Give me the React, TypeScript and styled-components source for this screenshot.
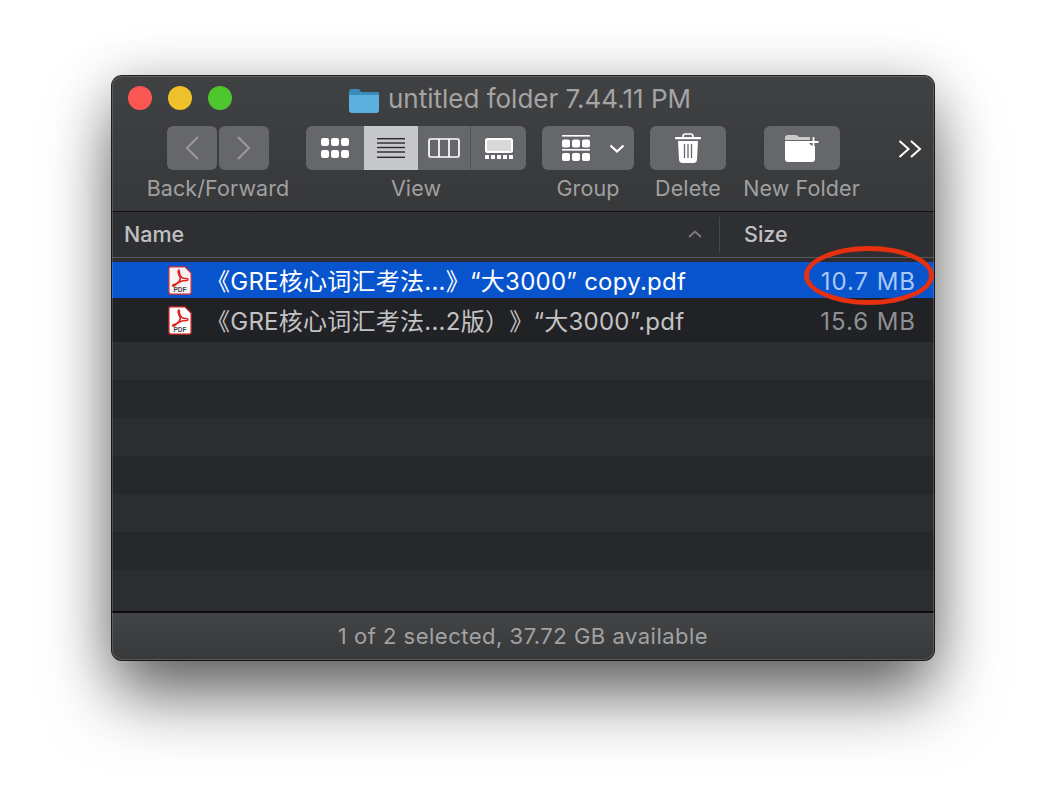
// npm
import React from 'react';
import styled, { createGlobalStyle } from 'styled-components';

// styles
const GlobalStyle = createGlobalStyle`
	html, body {
		background: #fff;
		margin: 0;
		padding: 0;
		overflow: hidden;
		font-family: Inter, 'Noto Sans CJK SC', sans-serif;
		text-spacing-trim: space-all;
	}
`;

const Page = styled.div`
	height: 808px;
	width: 1046px;
	padding: 76px 0 0 112px;
	box-sizing: border-box;
	position: relative;
`;

const Window = styled.div`
	width: 822px;
	height: 584px;
	box-sizing: border-box;
	border-radius: 10px;
	overflow: hidden;
	display: flex;
	flex-flow: column;
	background: #2b2e30;
	box-shadow:
		0 40px 68px -4px rgba(0, 0, 0, 0.55),
		0 6px 56px 0 rgba(0, 0, 0, 0.24);
`;

const Frame = styled.div`
	position: absolute;
	left: 112px;
	top: 76px;
	width: 822px;
	height: 584px;
	box-sizing: border-box;
	border-radius: 10px;
	pointer-events: none;
	box-shadow:
		0 0 0 1px rgba(0, 0, 0, 0.85),
		inset 0 0 0 1px rgba(255, 255, 255, 0.16);
`;

const Circle = styled.div`
	position: absolute;
	left: 804px;
	top: 246px;
	width: 120px;
	height: 49px;
	border: 5px solid #e6300f;
	border-radius: 50%;
`;

const Head = styled.div`
	flex: 0 0 136px;
	box-sizing: border-box;
	background: linear-gradient(#404143, #37383a);
	border-bottom: 1px solid #111;
	display: flex;
	flex-flow: column;
`;

const TitleBar = styled.div`
	flex: 0 0 50px;
	position: relative;
	display: flex;
	align-items: center;
	justify-content: center;
	gap: 9px;
	padding-right: 6px;
`;

const Lights = styled.div`
	position: absolute;
	left: 16px;
	top: 10px;
	display: flex;
	gap: 16px;
`;

const Light = styled.span<{ $color: string }>`
	width: 24px;
	height: 24px;
	border-radius: 50%;
	background: ${(p) => p.$color};
`;

const TitleText = styled.span`
	color: #a4a4a5;
	font-size: 26px;
	line-height: 30px;
	margin-top: -4px;
`;

const ToolRow = styled.div`
	flex: 1 1 auto;
	display: flex;
	gap: 16px;
	padding-left: 34px;
	position: relative;
`;

const ToolItem = styled.div<{ $width: number }>`
	flex: 0 0 auto;
	width: ${(p) => p.$width}px;
	display: flex;
	flex-flow: column;
	align-items: center;
	gap: 5px;
`;

const ToolPair = styled.div`
	display: flex;
	gap: 2px;
`;

const ToolButton = styled.div<{ $width: number }>`
	width: ${(p) => p.$width}px;
	height: 44px;
	box-sizing: border-box;
	background: #66676a;
	border-radius: 6px;
	display: flex;
	align-items: center;
	justify-content: center;
`;

const GroupButton = styled(ToolButton)`
	gap: 19px;
	padding-left: 10px;
`;

const Segments = styled.div`
	display: flex;
	border-radius: 6px;
	overflow: hidden;
`;

const Segment = styled.div<{ $width: number; $active?: boolean; $divider?: boolean }>`
	width: ${(p) => p.$width}px;
	height: 44px;
	box-sizing: border-box;
	background: ${(p) => (p.$active ? '#c6c7c9' : '#66676a')};
	border-left: ${(p) => (p.$divider ? '1px solid #545558' : 'none')};
	display: flex;
	align-items: center;
	justify-content: center;
`;

const ToolLabel = styled.div`
	color: #a0a0a1;
	font-size: 21.5px;
	letter-spacing: 0.1px;
	line-height: 26px;
	white-space: nowrap;
`;

const More = styled.div`
	position: absolute;
	left: 786px;
	top: 14px;
	line-height: 0;
`;

const ListHeader = styled.div`
	flex: 0 0 46px;
	box-sizing: border-box;
	background: #2e2f32;
	border-bottom: 1px solid #58585a;
	display: flex;
	align-items: center;
	color: #c0c0c1;
	font-size: 21.5px;
	font-weight: 500;
`;

const NameHead = styled.div`
	flex: 0 0 608px;
	box-sizing: border-box;
	height: 36px;
	padding: 0 17px 2px 12px;
	border-right: 1px solid #47484a;
	display: flex;
	align-items: center;
	justify-content: space-between;
`;

const SizeHead = styled.div`
	padding: 0 0 2px 24px;
`;

const ListBody = styled.div`
	flex: 1 1 auto;
	min-height: 0;
	overflow: hidden;
	display: flex;
	flex-flow: column;
	padding-top: 4px;
	background: #2b2d30;
`;

const FileRow = styled.div<{ $height: number; $selected?: boolean }>`
	flex: 0 0 ${(p) => p.$height}px;
	display: flex;
	align-items: center;
	padding: 0 18px 0 56px;
	background: ${(p) => (p.$selected ? '#0854cc' : '#212225')};
	color: ${(p) => (p.$selected ? '#fff' : '#c3c3c4')};
`;

const Stripe = styled.div<{ $even: boolean }>`
	flex: 0 0 38px;
	background: ${(p) => (p.$even ? '#2a2e30' : '#25272a')};
`;

const PdfIcon = styled.svg`
	flex: 0 0 auto;
`;

const FileName = styled.span`
	margin: 3px 0 0 14px;
	font-size: 24px;
	letter-spacing: 0.25px;
	line-height: 30px;
	white-space: nowrap;
`;

const FileSize = styled.span<{ $selected?: boolean }>`
	margin: 3px 0 0 auto;
	font-size: 24px;
	letter-spacing: 0.95px;
	line-height: 30px;
	color: ${(p) => (p.$selected ? '#a7c8f6' : '#8e8f91')};
`;

const StatusBar = styled.div`
	flex: 0 0 49px;
	box-sizing: border-box;
	background: linear-gradient(#434446, #37383a);
	border-top: 2px solid #0c0c0c;
	display: flex;
	align-items: center;
	justify-content: center;
	color: #a2a2a3;
	font-size: 22px;
	letter-spacing: 0.5px;
	padding-bottom: 1px;
`;

// icons
const SvgFolder = () => (
	<svg width='30' height='24' viewBox='0 0 30 24'>
		<path d='M0 4 Q0 0 3 0 H9 Q11 0 12 3 H29 Q30 3 30 5 V6 H0 Z' fill='#3a8dbb' />
		<path d='M0 6 H30 V21 Q30 24 27 24 H3 Q0 24 0 21 Z' fill='#5bb0df' />
	</svg>
);

const SvgChevron = ({ left }: { left?: boolean }) => (
	<svg width='16' height='26' viewBox='0 0 16 26'>
		<path d={left ? 'M14 2 L3 13 L14 24' : 'M2 2 L13 13 L2 24'} fill='none' stroke='#98989a' strokeWidth='2.2' />
	</svg>
);

const SvgGrid = () => (
	<svg width='28' height='20' viewBox='0 0 28 20'>
		{[0, 10, 20].map((x) =>
			[0, 12].map((y) => <rect key={`${x}-${y}`} x={x} y={y} width='8' height='8' rx='2.2' fill='#fff' />),
		)}
	</svg>
);

const SvgLines = () => (
	<svg width='28' height='20' viewBox='0 0 28 20'>
		{[0.7, 5, 9.5, 14, 19.3].map((y) => (
			<rect key={y} x='0' y={y - 0.7} width='28' height='1.4' fill='#2a2a2c' />
		))}
	</svg>
);

const SvgColumns = () => (
	<svg width='32' height='20' viewBox='0 0 32 20'>
		<rect x='1' y='1' width='30' height='18' rx='1.5' fill='none' stroke='#fff' strokeWidth='1.7' />
		<path d='M11 1 V19 M21 1 V19' stroke='#fff' strokeWidth='1.7' />
	</svg>
);

const SvgGallery = () => (
	<svg width='28' height='21' viewBox='0 0 28 21'>
		<rect x='1' y='1' width='26' height='13' rx='1.5' fill='#d8d8d9' stroke='#fff' strokeWidth='2' />
		{[0, 6, 12, 18, 24].map((x) => (
			<rect key={x} x={x} y='17' width='4' height='4' rx='0.6' fill='#fff' />
		))}
	</svg>
);

const SvgGroup = () => (
	<svg width='28' height='26' viewBox='0 0 28 26'>
		<rect x='0' y='0' width='28' height='1.6' fill='#fff' />
		<rect x='0' y='14' width='28' height='1.6' fill='#fff' />
		{[0, 10, 20].map((x) =>
			[4.5, 18].map((y) => <rect key={`${x}-${y}`} x={x} y={y} width='8' height='8' rx='2' fill='#fff' />),
		)}
	</svg>
);

const SvgCaret = () => (
	<svg width='16' height='9' viewBox='0 0 16 9'>
		<path d='M1.5 1.5 L8 7.5 L14.5 1.5' fill='none' stroke='#fff' strokeWidth='2.2' />
	</svg>
);

const SvgTrash = () => (
	<svg width='26' height='30' viewBox='0 0 26 30'>
		<path d='M8 5 V3.5 Q8 1 10.5 1 H15.5 Q18 1 18 3.5 V5' fill='none' stroke='#fff' strokeWidth='1.6' />
		<rect x='0' y='4' width='26' height='2.2' rx='1' fill='#fff' />
		<path d='M3 8 H23 L22 26.5 Q21.8 30 18.5 30 H7.5 Q4.2 30 4 26.5 Z' fill='#fff' />
		<path d='M9.5 11 V25 M13 11 V25 M16.5 11 V25' stroke='#66676a' strokeWidth='1.3' />
	</svg>
);

const SvgNewFolder = () => (
	<svg width='34' height='27' viewBox='0 0 34 27'>
		<path d='M0 3 Q0 0 3 0 H10 Q13 0 14 2 H25 V5 H0 Z' fill='#c9c9ca' />
		<path d='M0 6 H24 Q24 10 28 11 H30 V24 Q30 27 27 27 H3 Q0 27 0 24 Z' fill='#fff' />
		<path d='M29 5 V15 M24 10 H34' stroke='#fff' strokeWidth='1.8' transform='translate(-0.5 -3)' />
	</svg>
);

const SvgMore = () => (
	<svg width='24' height='18' viewBox='0 0 24 18'>
		<path d='M1.5 1 L10.5 9 L1.5 17 M13 1 L22 9 L13 17' fill='none' stroke='#fff' strokeWidth='2' />
	</svg>
);

const SvgSort = () => (
	<svg width='14' height='8' viewBox='0 0 14 8'>
		<path d='M1 7 L7 1.5 L13 7' fill='none' stroke='#7a7a7c' strokeWidth='2' />
	</svg>
);

const SvgPdf = ({ selected }: { selected?: boolean }) => (
	<PdfIcon width='24' height='29' viewBox='0 0 24 29'>
		<path
			d='M2.5 0.8 H17 L23.2 7 V26 Q23.2 28.2 21 28.2 H3 Q0.8 28.2 0.8 26 V2.5 Q0.8 0.8 2.5 0.8 Z'
			fill={selected ? '#f6f3f5' : '#fff'}
			stroke={selected ? '#b4324d' : '#b01c1c'}
			strokeWidth='1.4'
		/>
		<path
			d='M11 4 C9.5 4 10 8 12 11 C13.5 14 9 18 6 18.5 C3.5 19.5 5 21 7 19.5 C9 17 13 14.5 19 14.5 C21 14 20 12 17 12.5 C14 13 11 9 11.5 5.5 Z'
			fill='none'
			stroke='#e0231f'
			strokeWidth='1.5'
		/>
		<text
			x='12'
			y='26.2'
			textAnchor='middle'
			textLength='13'
			lengthAdjust='spacingAndGlyphs'
			fontFamily='Liberation Sans, sans-serif'
			fontSize='7.6'
			fontWeight='700'
			fill='#444'
		>
			PDF
		</text>
	</PdfIcon>
);

// components
const Toolbar = () => (
	<ToolRow>
		<ToolItem $width={144}>
			<ToolPair>
				<ToolButton $width={50}>
					<SvgChevron left />
				</ToolButton>
				<ToolButton $width={50}>
					<SvgChevron />
				</ToolButton>
			</ToolPair>
			<ToolLabel>Back/Forward</ToolLabel>
		</ToolItem>

		<ToolItem $width={220}>
			<Segments>
				<Segment $width={58}>
					<SvgGrid />
				</Segment>
				<Segment $width={54} $active>
					<SvgLines />
				</Segment>
				<Segment $width={52}>
					<SvgColumns />
				</Segment>
				<Segment $width={56} $divider>
					<SvgGallery />
				</Segment>
			</Segments>
			<ToolLabel>View</ToolLabel>
		</ToolItem>

		<ToolItem $width={92}>
			<GroupButton $width={92}>
				<SvgGroup />
				<SvgCaret />
			</GroupButton>
			<ToolLabel>Group</ToolLabel>
		</ToolItem>

		<ToolItem $width={76}>
			<ToolButton $width={76}>
				<SvgTrash />
			</ToolButton>
			<ToolLabel>Delete</ToolLabel>
		</ToolItem>

		<ToolItem $width={119}>
			<ToolButton $width={76}>
				<SvgNewFolder />
			</ToolButton>
			<ToolLabel>New Folder</ToolLabel>
		</ToolItem>

		<More>
			<SvgMore />
		</More>
	</ToolRow>
);

const FileList = () => (
	<>
		<ListHeader>
			<NameHead>
				Name
				<SvgSort />
			</NameHead>
			<SizeHead>Size</SizeHead>
		</ListHeader>

		<ListBody>
			<FileRow $height={36} $selected>
				<SvgPdf selected />
				<FileName>《GRE核心词汇考法...》“大3000” copy.pdf</FileName>
				<FileSize $selected>10.7 MB</FileSize>
			</FileRow>
			<FileRow $height={44}>
				<SvgPdf />
				<FileName>《GRE核心词汇考法...2版）》“大3000”.pdf</FileName>
				<FileSize>15.6 MB</FileSize>
			</FileRow>
			{[0, 1, 2, 3, 4, 5, 6].map((i) => (
				<Stripe key={i} $even={i % 2 === 0} />
			))}
		</ListBody>
	</>
);

export default function App() {
	return (
		<Page>
			<GlobalStyle />

			<Window>
				<Head>
					<TitleBar>
						<Lights>
							<Light $color='#fc5753' />
							<Light $color='#eec02a' />
							<Light $color='#4ec72f' />
						</Lights>
						<SvgFolder />
						<TitleText>untitled folder 7.44.11 PM</TitleText>
					</TitleBar>

					<Toolbar />
				</Head>

				<FileList />

				<StatusBar>1 of 2 selected, 37.72 GB available</StatusBar>
			</Window>

			<Frame />
			<Circle />
		</Page>
	);
}
